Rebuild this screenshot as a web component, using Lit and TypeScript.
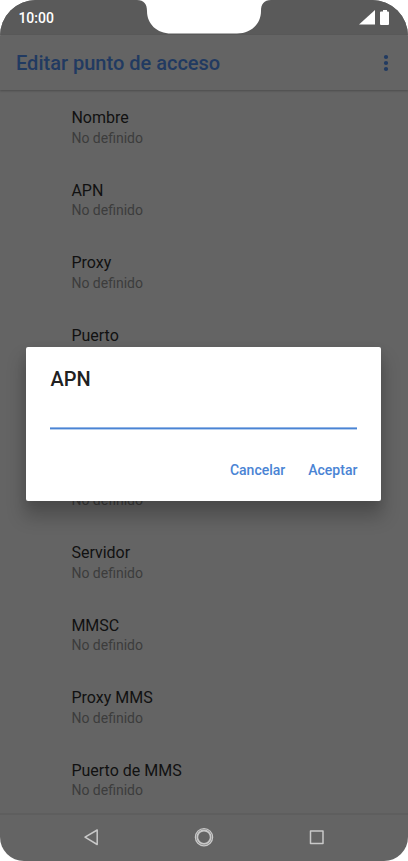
import { LitElement, html, css } from "lit";
import { customElement } from "lit/decorators.js";

@customElement("app-root")
export class AppRoot extends LitElement {
  static styles = css`
    :host {
      display: block;
      width: 408px;
      height: 861px;
      overflow: hidden;
      background: #fff;
      font-family: Roboto, "Liberation Sans", sans-serif;
    }
    .screen {
      position: relative;
      display: flex;
      flex-direction: column;
      height: 861px;
      overflow: hidden;
      background: #646464;
      border-radius: 36px 36px 24px 24px;
    }
    .status {
      flex: none;
      display: flex;
      justify-content: space-between;
      height: 35px;
      box-sizing: border-box;
      padding: 0 18px 0 18.4px;
      background: #5a5a5a;
      color: #fff;
      font-size: 14px;
      font-weight: 500;
      line-height: 36px;
    }
    .notch {
      position: absolute;
      left: 137px;
      top: 0;
    }
    .signals {
      display: block;
      margin-top: 9px;
    }
    .bar {
      flex: none;
      display: flex;
      align-items: center;
      justify-content: space-between;
      height: 55px;
      box-sizing: border-box;
      padding: 0 19px 0 16px;
      color: #213a61;
      box-shadow: 0 1px 2px rgba(0, 0, 0, 0.25);
    }
    h1 {
      margin: 0;
      font-size: 20px;
      font-weight: 500;
      line-height: 24px;
    }
    .more {
      display: block;
    }
    .list {
      flex: 1;
      min-height: 0;
      overflow: hidden;
      margin: 0;
      padding: 17px 0 0 71.4px;
    }
    .row {
      height: 72.5px;
    }
    .name {
      font-size: 16px;
      line-height: 21px;
      color: #111;
    }
    .value {
      margin-top: -0.3px;
      font-size: 14px;
      line-height: 20px;
      color: #3c3c3c;
    }
    .nav {
      flex: none;
      display: flex;
      justify-content: center;
      height: 48px;
      box-sizing: border-box;
      border-top: 2px solid #5e5e5e;
    }
    .dialog {
      position: absolute;
      left: 26.4px;
      top: 347px;
      width: 355px;
      height: 154px;
      box-sizing: border-box;
      padding: 20px 24px 0;
      background: #fff;
      border-radius: 2px;
      box-shadow: 0 14px 18px 2px rgba(0, 0, 0, 0.22), 0 3px 10px rgba(0, 0, 0, 0.08);
    }
    h2 {
      margin: 0;
      font-size: 20px;
      font-weight: 500;
      line-height: 24px;
      color: #212121;
    }
    .field {
      display: block;
      margin-top: 35px;
    }
    .actions {
      display: flex;
      justify-content: flex-end;
      gap: 23px;
      padding-top: 30px;
      font-size: 14px;
      font-weight: 500;
      line-height: 20px;
      color: #4a84d4;
    }
  `;

  private settings = [
    "Nombre",
    "APN",
    "Proxy",
    "Puerto",
    "Nombre de usuario",
    "Contraseña",
    "Servidor",
    "MMSC",
    "Proxy MMS",
    "Puerto de MMS",
  ];

  render() {
    return html`
      <div class="screen">
        <div class="status">
          <span>10:00</span>
          <svg class="signals" width="31" height="17" viewBox="0 0 31 17" fill="#fff">
            <path d="M16 1V15.5H0Z" />
            <path d="M22 2.500H24V1H28V2.500H29Q30 2.500 30 3.500V15Q30 16 29 16H22Q21 16 21 15V3.500Q21 2.500 22 2.500Z" />
          </svg>
        </div>
        <svg class="notch" width="134" height="34" viewBox="0 0 134 34">
          <path fill="#fff" d="M0 0C7 0 10 4 10 11C10 24 20 33.500 34 33.500H100C114 33.500 124 24 124 11C124 4 127 0 134 0Z" />
        </svg>
        <div class="bar">
          <h1>Editar punto de acceso</h1>
          <svg class="more" width="6" height="18" viewBox="0 0 6 18" fill="#213a61">
            <circle cx="3" cy="3" r="2.100" />
            <circle cx="3" cy="9" r="2.100" />
            <circle cx="3" cy="15" r="2.100" />
          </svg>
        </div>
        <div class="list">
          ${this.settings.map(
            (name) => html`<div class="row">
              <div class="name">${name}</div>
              <div class="value">No definido</div>
            </div>`
          )}
        </div>
        <div class="nav">
          <svg width="408" height="46" viewBox="0 815 408 46" fill="none" stroke="#c8c8c8" stroke-width="1.500" stroke-linejoin="round">
            <path d="M97.200 830V844.500L85 837.200Z" />
            <circle cx="204" cy="837.200" r="8.600" stroke-width="1.300" />
            <circle cx="204" cy="837.200" r="6.700" stroke-width="1.800" />
            <rect x="310.500" y="831" width="12.500" height="12.500" />
          </svg>
        </div>
        <div class="dialog">
          <h2>APN</h2>
          <svg class="field" width="307" height="4" viewBox="0 0 307 4">
            <rect y="1.400" width="307" height="2" fill="#4a84d4" />
          </svg>
          <div class="actions"><span>Cancelar</span><span>Aceptar</span></div>
        </div>
      </div>
    `;
  }
}
